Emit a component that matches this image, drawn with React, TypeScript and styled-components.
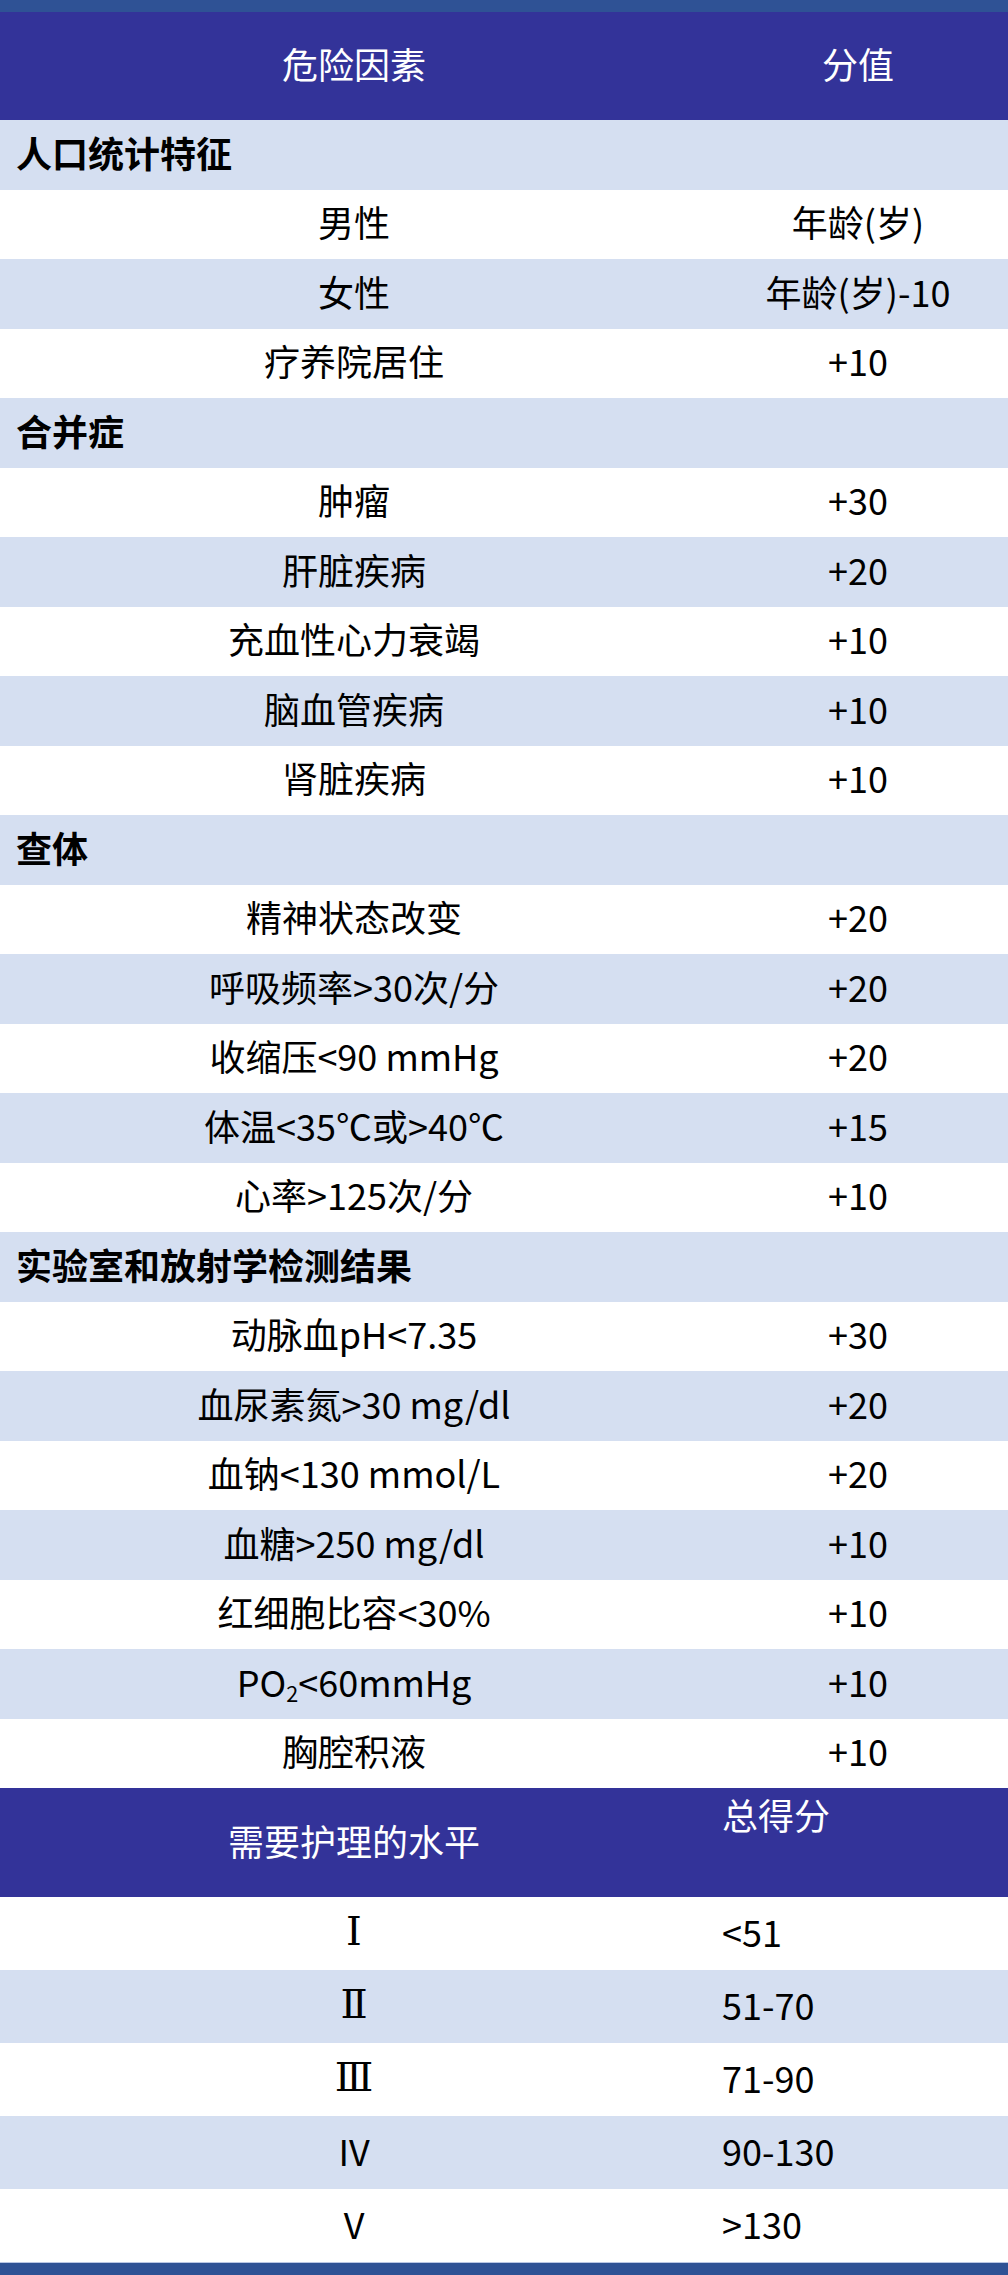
import styled, { createGlobalStyle } from 'styled-components'

const GlobalStyle = createGlobalStyle`
    html, body {
        margin: 0;
        padding: 0;
        background: #ffffff;
    }
    body {
        font-family: "Noto Sans CJK SC", "Noto Sans", sans-serif;
        color: #000000;
    }
`

interface Linha {
    fator?: React.ReactNode
    valor?: string
    secao?: string
}

const riscos: Linha[] = [
    { secao: '人口统计特征' },
    { fator: '男性', valor: '年龄(岁)' },
    { fator: '女性', valor: '年龄(岁)-10' },
    { fator: '疗养院居住', valor: '+10' },
    { secao: '合并症' },
    { fator: '肿瘤', valor: '+30' },
    { fator: '肝脏疾病', valor: '+20' },
    { fator: '充血性心力衰竭', valor: '+10' },
    { fator: '脑血管疾病', valor: '+10' },
    { fator: '肾脏疾病', valor: '+10' },
    { secao: '查体' },
    { fator: '精神状态改变', valor: '+20' },
    { fator: '呼吸频率>30次/分', valor: '+20' },
    { fator: '收缩压<90 mmHg', valor: '+20' },
    { fator: '体温<35℃或>40℃', valor: '+15' },
    { fator: '心率>125次/分', valor: '+10' },
    { secao: '实验室和放射学检测结果' },
    { fator: '动脉血pH<7.35', valor: '+30' },
    { fator: '血尿素氮>30 mg/dl', valor: '+20' },
    { fator: '血钠<130 mmol/L', valor: '+20' },
    { fator: '血糖>250 mg/dl', valor: '+10' },
    { fator: '红细胞比容<30%', valor: '+10' },
    { fator: <>PO<sub>2</sub>&lt;60mmHg</>, valor: '+10' },
    { fator: '胸腔积液', valor: '+10' },
]

const niveis = [
    { nivel: 'Ⅰ', serif: true, pontos: '<51' },
    { nivel: 'Ⅱ', serif: true, pontos: '51-70' },
    { nivel: 'Ⅲ', serif: true, pontos: '71-90' },
    { nivel: 'IV', serif: false, pontos: '90-130' },
    { nivel: 'V', serif: false, pontos: '>130' },
]

const Pagina = styled.div`
    width: 1008px;
    display: flex;
    flex-direction: column;
`

const Faixa = styled.div`
    height: 12px;
    background: #2f5295;
`

const FaixaBase = styled(Faixa)`
    height: 13px;
    border-top: 1px solid #b9c6e4;
    box-sizing: border-box;
`

const Cabecalho = styled.div<{ $altura: number }>`
    display: grid;
    grid-template-columns: 708px 1fr;
    height: ${(p) => p.$altura}px;
    background: #333399;
    color: #ffffff;
    font-size: 36px;
    line-height: 44px;
`

const CelulaCabecalho = styled.div<{ $topo?: boolean; $esquerda?: boolean }>`
    display: flex;
    align-items: ${(p) => (p.$topo ? 'flex-start' : 'center')};
    justify-content: ${(p) => (p.$esquerda ? 'flex-start' : 'center')};
    padding: ${(p) => (p.$topo ? '4px 0 0 14px' : '0 0 6px 0')};
`

const Fileira = styled.div<{ $clara: boolean; $altura: number }>`
    display: grid;
    grid-template-columns: 708px 1fr;
    height: ${(p) => p.$altura}px;
    background: ${(p) => (p.$clara ? '#d5dff1' : '#ffffff')};
    font-size: 36px;
    line-height: 44px;
`

const Celula = styled.div<{ $esquerda?: boolean }>`
    display: flex;
    align-items: center;
    justify-content: ${(p) => (p.$esquerda ? 'flex-start' : 'center')};
    padding: 0 0 6px ${(p) => (p.$esquerda ? '14px' : '0')};
    white-space: nowrap;
`

const Texto = styled.span`
    sub {
        font-size: 0.6em;
        line-height: 0;
        vertical-align: -0.25em;
    }
`

const Secao = styled.div`
    grid-column: 1 / -1;
    display: flex;
    align-items: center;
    padding: 0 0 6px 16px;
    font-weight: 700;
`

const Romano = styled.span<{ $serif: boolean }>`
    font-family: ${(p) => (p.$serif ? '"DejaVu Serif", "Liberation Serif", serif' : 'inherit')};
    font-size: ${(p) => (p.$serif ? '40px' : '36px')};
`

function App() {
    return (
        <>
            <GlobalStyle />
            <Pagina>
                <Faixa />
                <Cabecalho $altura={108}>
                    <CelulaCabecalho>危险因素</CelulaCabecalho>
                    <CelulaCabecalho>分值</CelulaCabecalho>
                </Cabecalho>
                {riscos.map((linha, i) => (
                    <Fileira key={i} $clara={i % 2 === 0} $altura={69.5}>
                        {linha.secao ? (
                            <Secao>{linha.secao}</Secao>
                        ) : (
                            <>
                                <Celula><Texto>{linha.fator}</Texto></Celula>
                                <Celula><Texto>{linha.valor}</Texto></Celula>
                            </>
                        )}
                    </Fileira>
                ))}
                <Cabecalho $altura={109}>
                    <CelulaCabecalho>需要护理的水平</CelulaCabecalho>
                    <CelulaCabecalho $topo $esquerda>总得分</CelulaCabecalho>
                </Cabecalho>
                {niveis.map((n, i) => (
                    <Fileira key={n.pontos} $clara={i % 2 === 1} $altura={73}>
                        <Celula>
                            <Romano $serif={n.serif}>{n.nivel}</Romano>
                        </Celula>
                        <Celula $esquerda><Texto>{n.pontos}</Texto></Celula>
                    </Fileira>
                ))}
                <FaixaBase />
            </Pagina>
        </>
    )
}

export default App
